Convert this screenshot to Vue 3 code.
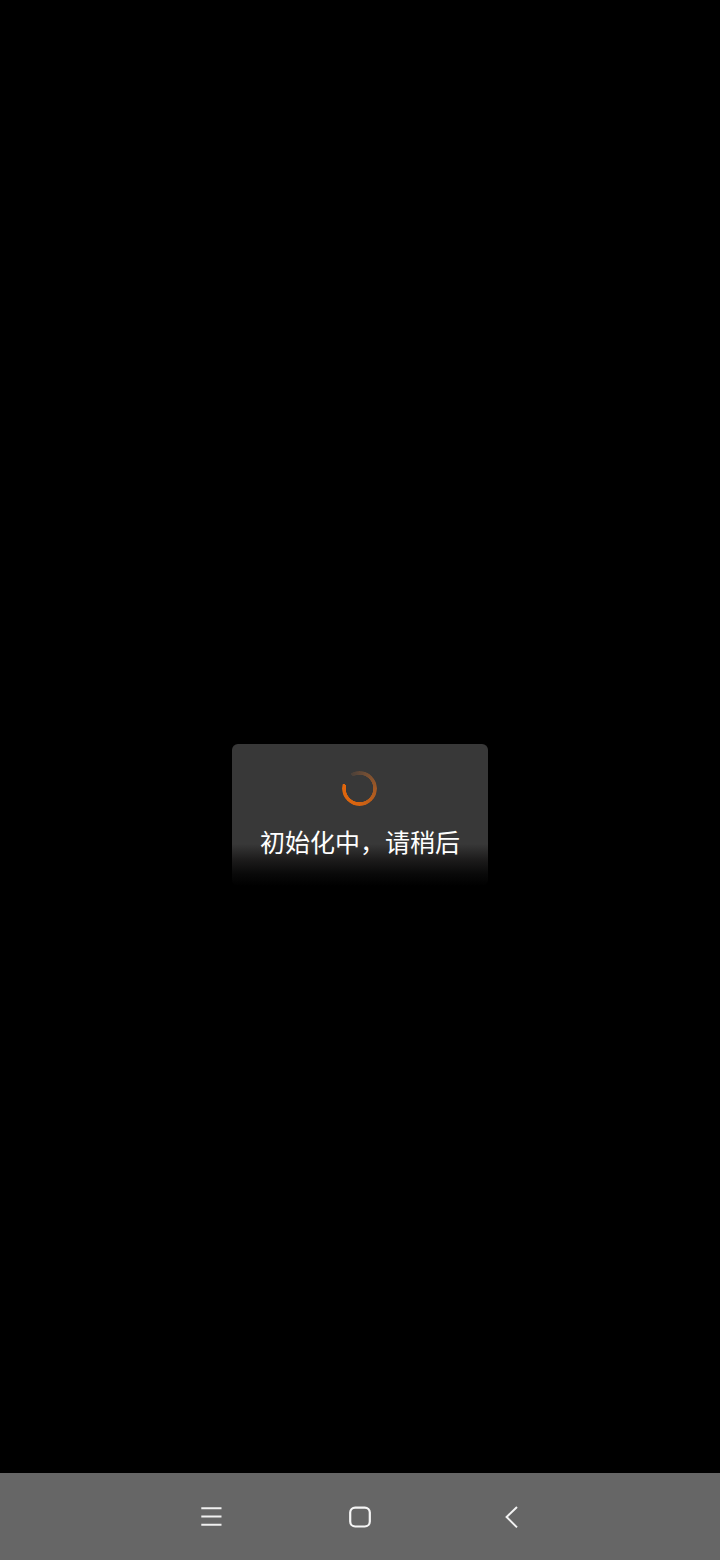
<script setup>
const message = '初始化中\uFF0C请稍后'
</script>

<template>
  <div class="screen">
    <main class="stage">
      <div class="toast">
        <div class="spinner"></div>
        <p class="message">{{ message }}</p>
      </div>
    </main>
    <nav class="navbar">
      <svg width="24" height="24" viewBox="0 0 24 24" fill="none" stroke="#f0f0f0" stroke-width="1.9">
        <path d="M3.3 3.2h20.2M3.3 11.5h20.2M3.3 19.8h20.2" />
      </svg>
      <svg width="24" height="24" viewBox="0 0 24 24" fill="none" stroke="#f5f5f5" stroke-width="2.2">
        <rect x="2.2" y="2.6" width="19.6" height="18.9" rx="5" />
      </svg>
      <svg width="24" height="24" viewBox="0 0 24 24" fill="none" stroke="#f2f2f2" stroke-width="2">
        <path d="M19 2 8.6 12 19 22.4" />
      </svg>
    </nav>
  </div>
</template>

<style scoped>
.screen {
  display: flex;
  flex-direction: column;
  height: 1560px;
  background: #000;
  font-family: "Noto Sans CJK SC", "Liberation Sans", sans-serif;
}

.stage {
  flex: 1;
  display: flex;
  justify-content: center;
  padding-top: 744px;
  box-sizing: border-box;
}

.toast {
  display: flex;
  flex-direction: column;
  align-items: center;
  box-sizing: border-box;
  width: 256px;
  height: 142px;
  padding-top: 27px;
  border-radius: 6px;
  background: linear-gradient(to bottom, #383838 0, #383838 100px, #1c1b1b 116px, #090909 130px, #000 142px);
}

.spinner {
  flex: none;
  width: 35px;
  height: 35px;
  margin-left: -1px;
  border-radius: 50%;
  background: conic-gradient(from 330deg, #4a4039 0deg, #6f4d35 50deg, #a85a22 130deg, #d9640f 220deg, #e0660c 315deg, transparent 316deg);
  -webkit-mask: radial-gradient(circle closest-side, transparent 13.4px, #000 14px);
  mask: radial-gradient(circle closest-side, transparent 13.4px, #000 14px);
}

.message {
  margin: 17px 0 0;
  font-size: 25px;
  line-height: 36px;
  color: #fff;
  white-space: nowrap;
}

.navbar {
  flex: none;
  display: flex;
  justify-content: center;
  align-items: center;
  gap: 126px;
  height: 87px;
  background: #666;
}
</style>
